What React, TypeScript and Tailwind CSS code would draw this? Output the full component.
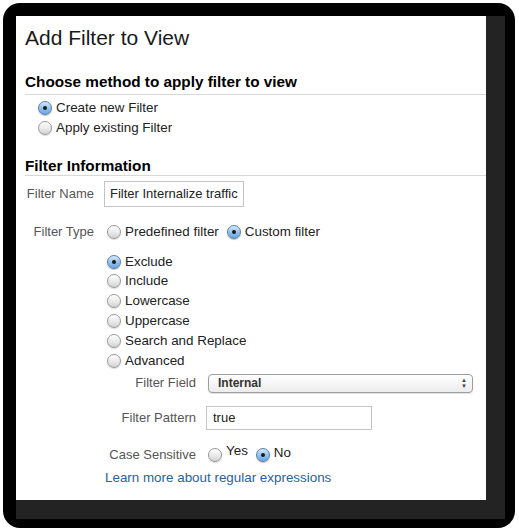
import type { ReactNode } from "react";

function Radio({ checked = false }: { checked?: boolean }) {
  return (
    <span
      className={`relative inline-flex h-[14px] w-[14px] shrink-0 items-center justify-center rounded-full border ${
        checked
          ? "border-[#5b7ea6] bg-[linear-gradient(#d6e9fb,#8fc0ee_55%,#6aa8e6)] shadow-[0_1px_1px_rgba(0,0,0,0.25)]"
          : "border-[#9a9a9a] bg-[linear-gradient(#ffffff,#e9e9e9_55%,#d2d2d2)] shadow-[0_1px_1px_rgba(0,0,0,0.15)]"
      }`}
    >
      {checked && <span className="h-[4px] w-[4px] rounded-full bg-[#1a1a1a]" />}
    </span>
  );
}

function RadioRow({ checked, children }: { checked?: boolean; children: ReactNode }) {
  return (
    <div className="flex h-[19.8px] items-center gap-[4px]">
      <Radio checked={checked} />
      <span className="text-[13.4px]">{children}</span>
    </div>
  );
}

function Field({ label, width, children }: { label: string; width: string; children: ReactNode }) {
  return (
    <div className="flex items-center">
      <span className={`${width} shrink-0 text-right text-[#555]`}>{label}</span>
      {children}
    </div>
  );
}

export default function App() {
  const types = ["Exclude", "Include", "Lowercase", "Uppercase", "Search and Replace", "Advanced"];

  return (
    <div className="h-[532px] w-[519px] bg-white pl-[3px] pt-[3px] font-['Liberation_Sans',Arial,sans-serif] text-[13px] text-[#222]">
      <div className="flex h-[525px] w-[512px] rounded-[17px] bg-black pb-[9px] pl-[13px] pr-[10px] pt-[13px]">
        <div className="flex flex-1 bg-[#232323] pb-[19px] pr-[19px]">
          <div className="flex flex-1 flex-col bg-white pt-[10px]">
            <h1 className="pl-[9px] text-[21px] leading-[24px] text-[#1a1a1a]">Add Filter to View</h1>

            <h2 className="ml-[9px] mt-[23px] border-b border-[#d8d8d8] pb-[3px] text-[15.3px] font-bold leading-[18px] text-black">
              Choose method to apply filter to view
            </h2>
            <div className="mt-[3px] pl-[22px]">
              <RadioRow checked>Create new Filter</RadioRow>
              <RadioRow>Apply existing Filter</RadioRow>
            </div>

            <h2 className="ml-[9px] mt-[19px] border-b border-[#d8d8d8] pb-0 text-[15.3px] font-bold leading-[18px] text-black">
              Filter Information
            </h2>

            <div className="mt-[5px] flex flex-col">
              <Field label="Filter Name" width="w-[78px]">
                <div className="ml-[10px] flex h-[26px] w-[140px] items-center border border-[#c4c4c4] px-[5px]">
                  Filter Internalize traffic
                </div>
              </Field>

              <div className="mt-[15px] flex items-center">
                <span className="w-[78px] shrink-0 text-right text-[#555]">Filter Type</span>
                <div className="ml-[13px] flex items-center gap-[4px] text-[13.4px]">
                  <Radio />
                  <span className="mr-[4px]">Predefined filter</span>
                  <Radio checked />
                  <span>Custom filter</span>
                </div>
              </div>

              <div className="mt-[10px] pl-[91px]">
                {types.map((t, i) => (
                  <RadioRow key={t} checked={i === 0}>
                    {t}
                  </RadioRow>
                ))}
              </div>

              <div className="mt-[3px] flex flex-col">
                <Field label="Filter Field" width="w-[180px]">
                  <div className="ml-[12px] flex h-[19px] w-[265px] items-center justify-between rounded-[4px] border border-[#9d9d9d] bg-[linear-gradient(#ffffff,#ececec)] pl-[9px] pr-[5px] shadow-[0_1px_1px_rgba(0,0,0,0.12)]">
                    <span className="text-[12px] font-bold text-[#333]">Internal</span>
                    <span className="flex flex-col text-[6px] leading-[6px] text-[#444]">
                      <span>▲</span>
                      <span>▼</span>
                    </span>
                  </div>
                </Field>

                <div className="mt-[13px]">
                  <Field label="Filter Pattern" width="w-[180px]">
                    <div className="ml-[10px] flex h-[24px] w-[166px] items-center border border-[#c4c4c4] px-[6px]">
                      true
                    </div>
                  </Field>
                </div>

                <div className="mt-[15px] flex items-center">
                  <span className="w-[180px] shrink-0 text-right text-[#555]">Case Sensitive</span>
                  <div className="ml-[12px] flex items-center gap-[4px] text-[13.4px]">
                    <Radio />
                    <span className="mr-[4px] -translate-y-[4px]">Yes</span>
                    <Radio checked />
                    <span className="-translate-y-[2px]">No</span>
                  </div>
                </div>

                <a href="#" className="ml-[89px] mt-[3px] text-[13.4px] text-[#2b5f9e]">
                  Learn more about regular expressions
                </a>
              </div>
            </div>
          </div>
        </div>
      </div>
    </div>
  );
}
